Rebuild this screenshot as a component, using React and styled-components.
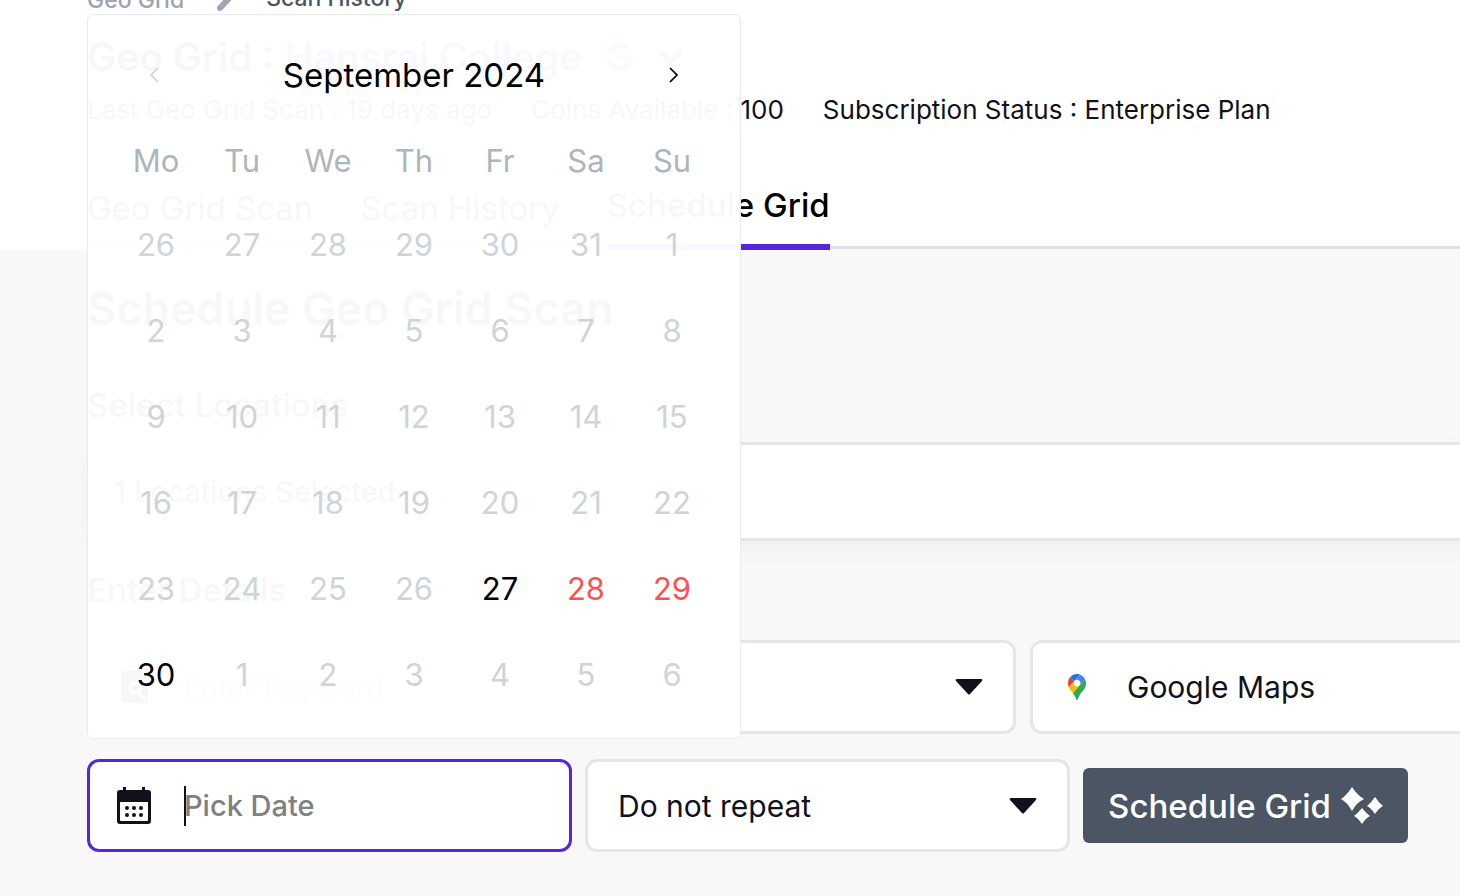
import React, { useState } from "react";
import styled, { createGlobalStyle } from "styled-components";

const GlobalStyle = createGlobalStyle`
  *, *::before, *::after {
    box-sizing: border-box;
  }

  body {
    margin: 0;
    background-color: #f8f8f8;
    color: #11111b;
    font-family: Inter, "Open Sans", sans-serif;
    overflow-x: hidden;
  }

  button, input, select {
    font-family: inherit;
    color: inherit;
  }
`;

const Page = styled.div`
  min-height: 100vh;
  overflow: hidden;
`;

const Header = styled.header`
  background-color: #fff;
  padding-left: 87px;
`;

const Breadcrumb = styled.nav`
  height: 14px;
  display: flex;
  align-items: flex-end;
  gap: 32px;
  font-size: 23px;
  line-height: 28px;
  font-weight: 500;
`;

const Crumb = styled.a`
  color: ${(props) => (props.$current ? "#4b5563" : "#9ca3af")};
  text-decoration: none;
  padding-bottom: ${(props) => (props.$current ? "2px" : "0")};
`;

const TitleRow = styled.div`
  display: flex;
  align-items: center;
  gap: 24px;
  height: 50px;
  margin-top: 18px;
`;

const Title = styled.h1`
  margin: 0;
  font-size: 39px;
  line-height: 50px;
  font-weight: 600;
`;

const PlaceName = styled.span`
  color: #5925dc;
`;

const InfoRow = styled.div`
  display: flex;
  gap: 39px;
  margin-top: 12px;
  font-size: 26px;
  line-height: 32px;
  white-space: nowrap;
`;

const Tabs = styled.nav`
  display: flex;
  align-items: flex-end;
  gap: 47px;
  height: 123px;
  border-bottom: 3px solid #dee2e6;
`;

const Tab = styled.a`
  font-size: 33px;
  line-height: 40px;
  font-weight: ${(props) => (props.$active ? 500 : 400)};
  color: ${(props) => (props.$active ? "#000" : "#11111b")};
  text-decoration: none;
  white-space: nowrap;
  padding-bottom: ${(props) => (props.$active ? "19px" : "18px")};
  border-bottom: ${(props) => (props.$active ? "6px solid #5925dc" : "none")};
  margin-bottom: ${(props) => (props.$active ? "-4px" : "0")};
`;

const Main = styled.main`
  padding: 30px 52px 44px 87px;
`;

const SectionTitle = styled.h2`
  margin: 0 0 46px;
  font-size: 45px;
  line-height: 60px;
  font-weight: 600;
`;

const FieldTitle = styled.h3`
  margin: 0;
  font-size: 33px;
  line-height: 40px;
  font-weight: 500;
`;

const LocationButton = styled.button`
  display: block;
  width: calc(100% + 80px);
  height: 99px;
  margin: 17px 0 29px;
  padding: 0 24px;
  border: 3px solid #e5e5ea;
  border-radius: 12px;
  background-color: #fff;
  box-shadow: 0 8px 28px -6px rgba(0, 0, 0, 0.05);
  font-size: 29px;
  text-align: left;
`;

const KeywordRow = styled.div`
  display: grid;
  grid-template-columns: 929fr 460fr;
  gap: 14px;
  margin: 30px -82px 25px 0;
`;

const ScheduleRow = styled.div`
  display: grid;
  grid-template-columns: minmax(0, 1fr) minmax(0, 1fr) auto;
  align-items: center;
  gap: 13px;
`;

const Field = styled.label`
  display: flex;
  align-items: center;
  height: ${(props) => (props.$tall ? "94px" : "93px")};
  padding: 0 30px;
  border: 3px solid ${(props) => (props.$focused ? "#5925dc" : "#e5e5ea")};
  border-radius: 12px;
  background-color: #fff;
`;

const FieldIcon = styled.span`
  display: flex;
  flex: none;
  align-items: center;
  justify-content: center;
  width: 34px;
  margin: 0 33px 0 -3px;
`;

const TextInput = styled.input`
  flex: 1;
  min-width: 0;
  height: 44px;
  padding: 0;
  border: none;
  outline: none;
  background: transparent;
  font-size: 29px;
  font-weight: ${(props) => props.$weight};

  &::placeholder {
    color: ${(props) => props.$placeholder};
    opacity: 1;
  }
`;

const Cursor = styled.span`
  width: 2px;
  height: 40px;
  margin-right: -2px;
  background-color: #11111b;
`;

const Select = styled.select`
  flex: 1;
  min-width: 0;
  height: 44px;
  padding: 0;
  border: none;
  outline: none;
  appearance: none;
  background: transparent;
  font-size: 30px;
`;

const ScheduleButton = styled.button`
  display: flex;
  align-items: center;
  gap: 10px;
  height: 75px;
  padding: 0 25px;
  border: none;
  border-radius: 6px;
  background-color: #4b5563;
  color: #fff;
  font-size: 33px;
  font-weight: 500;
  white-space: nowrap;
`;

const DateField = styled.div`
  position: relative;
`;

const Calendar = styled.div`
  position: absolute;
  left: 0;
  bottom: calc(100% + 20px);
  width: 654px;
  padding: 16px 25px 21px;
  border: 1px solid #e9ecef;
  border-radius: 6px;
  background-color: rgba(255, 255, 255, 0.97);
`;

const CalendarHeader = styled.div`
  display: flex;
  align-items: center;
  justify-content: space-between;
  height: 88px;
`;

const CalendarTitle = styled.span`
  color: #000;
  font-size: 33px;
`;

const ArrowButton = styled.button`
  display: flex;
  align-items: center;
  justify-content: center;
  width: 82px;
  height: 82px;
  padding: 0;
  border: none;
  background: none;
  color: #000;

  &:disabled {
    color: #ced4da;
  }
`;

const MonthTable = styled.table`
  width: 100%;
  table-layout: fixed;
  border-collapse: collapse;
`;

const Weekday = styled.th`
  height: 82px;
  padding: 0;
  color: #adb5bd;
  font-size: 31px;
  font-weight: 400;
`;

const DayCell = styled.td`
  height: 86px;
  padding: 0;
`;

const Day = styled.button`
  display: block;
  width: 100%;
  height: 86px;
  padding: 0;
  border: none;
  background: none;
  color: ${(props) => (props.$weekend ? "#fa5252" : "#000")};
  font-size: 31px;

  &:disabled {
    color: #ced4da;
  }
`;

const weekdays = ["Mo", "Tu", "We", "Th", "Fr", "Sa", "Su"];

// six weeks, starting from Monday 26 August
const weeks = Array.from({ length: 6 }, (_, week) =>
  Array.from({ length: 7 }, (_, day) => {
    const date = new Date(2024, 7, 26 + week * 7 + day);
    return {
      label: date.getDate(),
      enabled: date.getMonth() === 8 && date.getDate() >= 27,
      weekend: day > 4,
    };
  })
);

function CrumbChevron() {
  return (
    <svg width="18" height="28" viewBox="0 0 18 28" fill="none" stroke="#a3a6b2" strokeWidth="6" strokeLinecap="round">
      <path d="M4 -5L17 8L4 22" />
    </svg>
  );
}

function GoogleIcon() {
  return (
    <svg width="28" height="28" viewBox="0 0 48 48">
      <path fill="#EA4335" d="M24 9.5c3.54 0 6.71 1.22 9.21 3.6l6.85-6.85C35.9 2.38 30.47 0 24 0 14.62 0 6.51 5.38 2.56 13.22l7.98 6.19C12.43 13.72 17.74 9.5 24 9.5z" />
      <path fill="#4285F4" d="M46.98 24.55c0-1.57-.15-3.09-.38-4.55H24v9.02h12.94c-.58 2.96-2.26 5.48-4.78 7.18l7.73 6c4.51-4.18 7.09-10.36 7.09-17.65z" />
      <path fill="#FBBC05" d="M10.53 28.59c-.48-1.45-.76-2.99-.76-4.59s.27-3.14.76-4.59l-7.98-6.19C.92 16.46 0 20.12 0 24c0 3.88.92 7.54 2.56 10.78l7.97-6.19z" />
      <path fill="#34A853" d="M24 48c6.48 0 11.93-2.13 15.89-5.81l-7.73-6c-2.15 1.45-4.92 2.3-8.16 2.3-6.26 0-11.57-4.22-13.47-9.91l-7.98 6.19C6.51 42.62 14.62 48 24 48z" />
    </svg>
  );
}

function TitleChevron() {
  return (
    <svg width="26" height="16" viewBox="0 0 26 16" fill="none" stroke="#5925dc" strokeWidth="5">
      <path d="M2 2L13 13L24 2" />
    </svg>
  );
}

function ArrowIcon({ left }) {
  return (
    <svg width="10" height="16" viewBox="0 0 10 16" fill="none" stroke="currentColor" strokeWidth="1.7">
      <path d={left ? "M9 1L2 8L9 15" : "M1 1L8 8L1 15"} />
    </svg>
  );
}

function SelectCaret() {
  return (
    <svg width="28" height="16" viewBox="0 0 28 16" fill="#11111b">
      <path d="M2 0H26Q28 0 27 2L15 15Q14 16 13 15L1 2Q0 0 2 0Z" />
    </svg>
  );
}

function KeywordIcon() {
  return (
    <svg width="27" height="32" viewBox="0 0 27 32">
      <path fill="#11111b" d="M3 0H18L27 9V29Q27 32 24 32H3Q0 32 0 29V3Q0 0 3 0Z" />
      <g fill="none" stroke="#fff" strokeWidth="3">
        <circle cx="14" cy="17" r="5" />
        <path d="M17 21L25 29" />
      </g>
    </svg>
  );
}

function CalendarIcon() {
  return (
    <svg width="34" height="38" viewBox="0 0 34 38" fill="#11111b">
      <path fillRule="evenodd" d="M6 0H9V3H25V0H28V3H31Q34 3 34 6V34Q34 37 31 37H3Q0 37 0 34V6Q0 3 3 3H6ZM3 15V33Q3 34 4 34H30Q31 34 31 33V15Z" />
      <circle cx="10" cy="21" r="2" />
      <circle cx="17" cy="21" r="2" />
      <circle cx="24" cy="21" r="2" />
      <circle cx="10" cy="28" r="2" />
      <circle cx="17" cy="28" r="2" />
      <circle cx="24" cy="28" r="2" />
    </svg>
  );
}

function MapsIcon() {
  return (
    <svg width="18" height="26" viewBox="0 0 92.3 132.3">
      <path fill="#1a73e8" d="M60.2 2.2C55.8.8 51 0 46.1 0 32 0 19.3 6.4 10.8 16.5l21.8 18.3L60.2 2.2z" />
      <path fill="#ea4335" d="M10.8 16.5C4.1 24.5 0 34.9 0 46.1c0 8.7 1.7 15.7 4.6 22l28-33.3-21.8-18.3z" />
      <path fill="#4285f4" d="M46.2 28.5c9.8 0 17.7 7.9 17.7 17.7 0 4.3-1.6 8.3-4.2 11.4 0 0 13.9-16.6 27.5-32.7-5.6-10.8-15.3-19-27-22.7L32.6 34.8c3.3-3.8 8.1-6.3 13.6-6.3" />
      <path fill="#fbbc04" d="M46.2 63.8c-9.8 0-17.7-7.9-17.7-17.7 0-4.3 1.5-8.3 4.1-11.3l-28 33.3c4.8 10.6 12.8 19.2 21 29.9l34.1-40.5c-3.3 3.9-8.1 6.3-13.5 6.3" />
      <path fill="#34a853" d="M59.1 109.2c15.4-24.1 33.3-35 33.3-63 0-7.7-1.9-14.9-5.2-21.3L25.6 98c2.6 3.4 5.3 7.3 7.9 11.3 9.4 14.5 6.8 23.1 12.8 23.1s3.4-8.7 12.8-23.2" />
    </svg>
  );
}

function SparklesIcon() {
  return (
    <svg width="42" height="38" viewBox="0 0 42 38" fill="#fff">
      <path d="M11 0Q16 8 23 12Q16 15 11 24Q6 15 0 12Q6 8 11 0Z" />
      <path d="M34 10Q38 16 42 19Q38 21 34 27Q30 21 26 19Q30 16 34 10Z" />
      <path d="M21 21Q25 26 29 29Q25 31 21 37Q17 31 13 29Q17 26 21 21Z" />
    </svg>
  );
}

function DatePicker() {
  const [date, setDate] = useState("");

  return (
    <DateField>
      <Field $focused>
        <FieldIcon>
          <CalendarIcon />
        </FieldIcon>
        <Cursor />
        <TextInput
          aria-label="Pick Date"
          placeholder="Pick Date"
          value={date}
          readOnly
          $weight={500}
          $placeholder="#808080"
        />
      </Field>
      <Calendar>
        <CalendarHeader>
          <ArrowButton aria-label="Previous month" disabled>
            <ArrowIcon left />
          </ArrowButton>
          <CalendarTitle>September 2024</CalendarTitle>
          <ArrowButton aria-label="Next month">
            <ArrowIcon />
          </ArrowButton>
        </CalendarHeader>
        <MonthTable>
          <thead>
            <tr>
              {weekdays.map((name) => (
                <Weekday key={name}>{name}</Weekday>
              ))}
            </tr>
          </thead>
          <tbody>
            {weeks.map((week, index) => (
              <tr key={index}>
                {week.map((day) => (
                  <DayCell key={day.label}>
                    <Day
                      disabled={!day.enabled}
                      $weekend={day.weekend}
                      onClick={() => setDate(`${day.label} September 2024`)}
                    >
                      {day.label}
                    </Day>
                  </DayCell>
                ))}
              </tr>
            ))}
          </tbody>
        </MonthTable>
      </Calendar>
    </DateField>
  );
}

export default function App() {
  return (
    <Page>
      <GlobalStyle />
      <Header>
        <Breadcrumb>
          <Crumb href="#grid">Geo Grid</Crumb>
          <CrumbChevron />
          <Crumb href="#history" $current>Scan History</Crumb>
        </Breadcrumb>
        <TitleRow>
          <Title>
            Geo Grid : <PlaceName>Hansraj College</PlaceName>
          </Title>
          <GoogleIcon />
          <TitleChevron />
        </TitleRow>
        <InfoRow>
          <span>Last Geo Grid Scan : 19 days ago</span>
          <span>Coins Available : 100</span>
          <span>Subscription Status : Enterprise Plan</span>
        </InfoRow>
        <Tabs>
          <Tab href="#scan">Geo Grid Scan</Tab>
          <Tab href="#history">Scan History</Tab>
          <Tab href="#schedule" $active>Schedule Grid</Tab>
        </Tabs>
      </Header>
      <Main>
        <SectionTitle>Schedule Geo Grid Scan</SectionTitle>
        <FieldTitle>Select Locations</FieldTitle>
        <LocationButton>1 Locations Selected</LocationButton>
        <FieldTitle>Enter Details</FieldTitle>
        <KeywordRow>
          <Field $tall>
            <FieldIcon>
              <KeywordIcon />
            </FieldIcon>
            <TextInput
              aria-label="Keyword"
              placeholder="Enter Keyword"
              $weight={400}
              $placeholder="#9ca3af"
            />
            <SelectCaret />
          </Field>
          <Field $tall>
            <FieldIcon>
              <MapsIcon />
            </FieldIcon>
            <Select aria-label="Platform">
              <option>Google Maps</option>
            </Select>
          </Field>
        </KeywordRow>
        <ScheduleRow>
          <DatePicker />
          <Field>
            <Select aria-label="Repeat">
              <option>Do not repeat</option>
            </Select>
            <SelectCaret />
          </Field>
          <ScheduleButton>
            Schedule Grid
            <SparklesIcon />
          </ScheduleButton>
        </ScheduleRow>
      </Main>
    </Page>
  );
}
